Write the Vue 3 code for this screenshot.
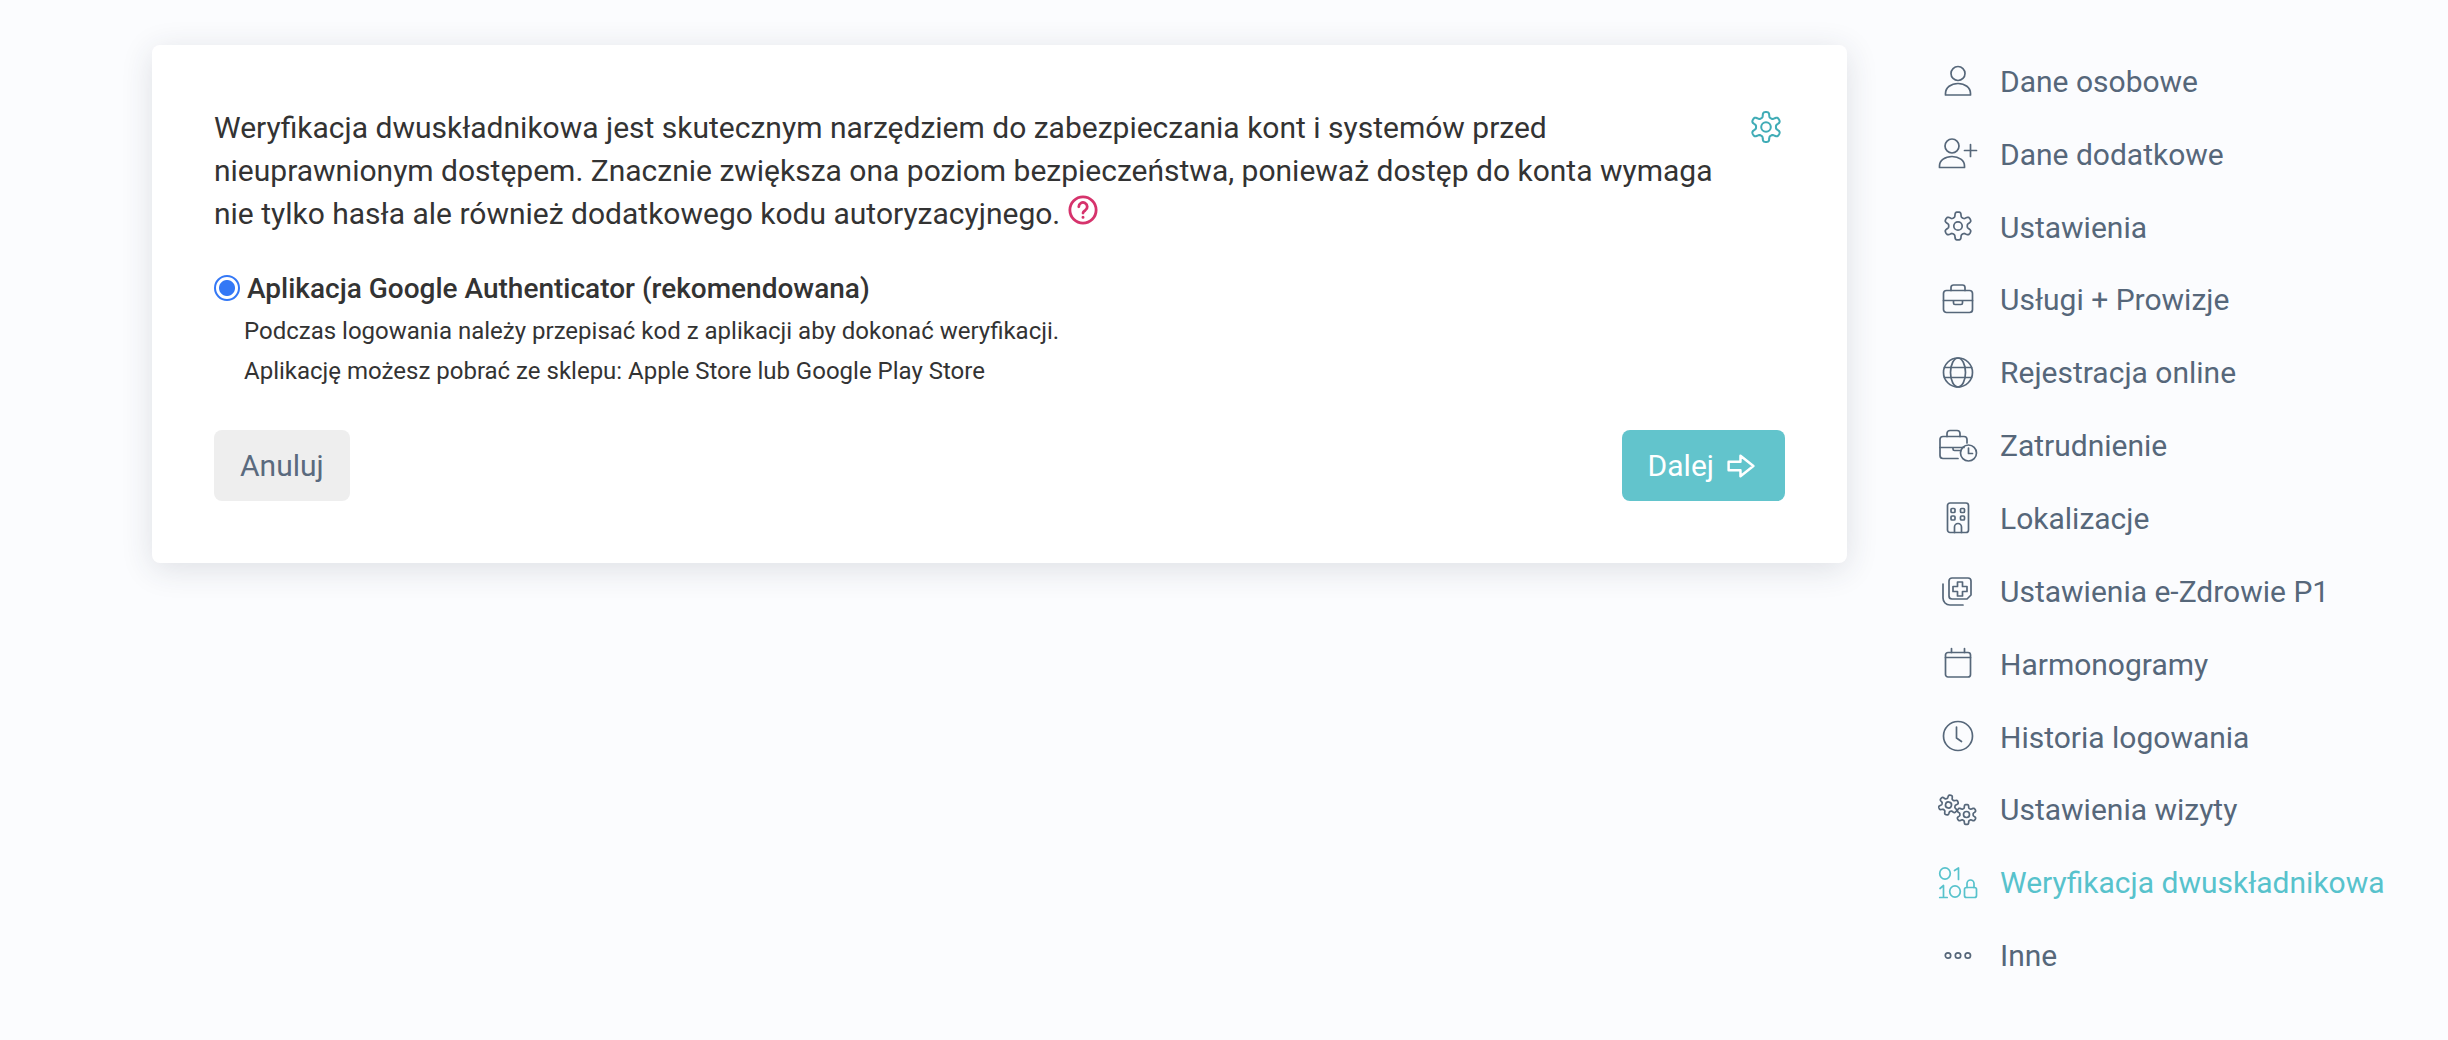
<template>
  <div class="page">
    <main class="card">
      <div class="intro">
        <p class="lead">
          Weryfikacja dwuskładnikowa jest skutecznym narzędziem do zabezpieczania kont i systemów przed
          nieuprawnionym dostępem. Znacznie zwiększa ona poziom bezpieczeństwa, ponieważ dostęp do konta wymaga
          nie tylko hasła ale również dodatkowego kodu autoryzacyjnego.
          <svg class="help" viewBox="0 0 32 32" fill="none" stroke="#d6336c" stroke-width="3" stroke-linecap="round">
            <circle cx="16" cy="16" r="14" />
            <path d="M11.500 12.500a4.500 4.500 0 1 1 7 3.700c-1.600 1-2.500 1.600-2.500 3" />
            <circle cx="16" cy="23.800" r=".8" fill="#d6336c" stroke-width="1.600" />
          </svg>
        </p>
        <svg class="gear" viewBox="0 0 24 24" fill="none" stroke="#40acb6" stroke-width="1.350" stroke-linejoin="round">
          <path :d="gearPath" />
          <circle cx="12" cy="12" r="3.200" />
        </svg>
      </div>

      <label class="option">
        <input type="radio" name="method" checked />
        <span>Aplikacja Google Authenticator (rekomendowana)</span>
      </label>
      <div class="option-desc">
        <p>Podczas logowania należy przepisać kod z aplikacji aby dokonać weryfikacji.</p>
        <p>Aplikację możesz pobrać ze sklepu: Apple Store lub Google Play Store</p>
      </div>

      <div class="actions">
        <button class="btn btn-cancel">Anuluj</button>
        <button class="btn btn-next">
          Dalej
          <svg viewBox="0 0 26 22" fill="none" stroke="#fff" stroke-width="2.300" stroke-linejoin="round">
            <path d="M1.500 7h11V1.500L24.500 11l-12 9.500V15h-11z" />
          </svg>
        </button>
      </div>
    </main>

    <nav class="menu">
      <a v-for="item in items" :key="item.label" class="menu-item" :class="{ active: item.active }">
        <span class="menu-icon">
          <svg
            viewBox="0 0 38 38"
            fill="none"
            stroke="currentColor"
            stroke-width="1.700"
            stroke-linecap="round"
            stroke-linejoin="round"
            v-html="item.icon"
          ></svg>
        </span>
        {{ item.label }}
      </a>
    </nav>
  </div>
</template>

<script setup>
// six lobed cog, radius 10 around (12, 12), a lobe pointing straight up
function buildGear() {
  const pts = []
  for (let i = 0; i < 144; i++) {
    const a = (i / 144) * Math.PI * 2
    const r = 8.3 + 1.7 * Math.tanh(2.2 * Math.cos(6 * a))
    pts.push(`${(12 + r * Math.sin(a)).toFixed(2)} ${(12 - r * Math.cos(a)).toFixed(2)}`)
  }
  return 'M' + pts.join('L') + 'z'
}

const gearPath = buildGear()

const cog = (cx, cy, s, rotate = 0) => {
  const x = cx - 12 * s
  const y = cy - 12 * s
  return `<g transform="translate(${x} ${y}) scale(${s}) rotate(${rotate} 12 12)" stroke-width="${1.7 / s}"><path d="${gearPath}"/><circle cx="12" cy="12" r="3"/></g>`
}

const items = [
  {
    label: 'Dane osobowe',
    icon: '<circle cx="19" cy="11.500" r="7"/><path d="M6.500 33v-1.500c0-6 5.500-10 12.500-10s12.500 4 12.500 10V33z"/>',
  },
  {
    label: 'Dane dodatkowe',
    icon: '<circle cx="13" cy="11" r="7"/><path d="M.5 32.500V31c0-5.500 5.500-9.500 12.500-9.500s12.500 4 12.500 9.500v1.500z"/><path d="M31.500 9.500v12M25.500 15.500h12"/>',
  },
  { label: 'Ustawienia', icon: cog(19, 18, 1.4) },
  {
    label: 'Usługi + Prowizje',
    icon: '<rect x="4.500" y="9.500" width="29" height="22" rx="3"/><path d="M12 9.500V6.500C12 5 13 4 14.500 4h9C25 4 26 5 26 6.500v3M4.500 19.500h29M14.500 19.500V22c0 .8.700 1.500 1.500 1.500h6c.8 0 1.500-.7 1.500-1.500v-2.500"/>',
  },
  {
    label: 'Rejestracja online',
    icon: '<circle cx="19" cy="18.500" r="14.500"/><ellipse cx="19" cy="18.500" rx="7.500" ry="14.500"/><path d="M5.500 13.500h27M5.500 23.500h27"/>',
  },
  {
    label: 'Zatrudnienie',
    icon: '<path d="M19 31.500H4c-1.700 0-3-1.300-3-3v-16c0-1.700 1.300-3 3-3h21c1.700 0 3 1.300 3 3V16"/><path d="M8 9.500v-3c0-1.700 1.300-3 3-3h7c1.700 0 3 1.300 3 3v3M1 20.500h24M14 20.500V22c0 .8.700 1.500 1.500 1.500h5"/><circle cx="29.500" cy="26" r="8"/><path d="M29.500 21v5.500h4"/>',
  },
  {
    label: 'Lokalizacje',
    icon: '<rect x="8.500" y="4" width="21" height="29.500" rx="2.500"/><rect x="12" y="9.500" width="4" height="4" rx="1"/><rect x="21.500" y="9.500" width="4" height="4" rx="1"/><rect x="12" y="17" width="4" height="4" rx="1"/><rect x="21.500" y="17" width="4" height="4" rx="1"/><path d="M15.500 33.500V28a3.500 3.500 0 0 1 7 0v5.500"/>',
  },
  {
    label: 'Ustawienia e-Zdrowie P1',
    icon: '<path d="M10 9c0-1.700 1.300-3 3-3h16c1.700 0 3 1.300 3 3v14l-4 4H13c-1.700 0-3-1.300-3-3z"/><path d="M18.500 10h5v4.500H28v5h-4.500V24h-5v-4.500H14v-5h4.500z"/><path d="M4 12v14c0 4 3 7 7 7h13"/>',
  },
  {
    label: 'Harmonogramy',
    icon: '<rect x="6.500" y="7.500" width="25" height="24.500" rx="2.500"/><path d="M6.500 12.500h25M12.500 3.500v4M25.500 3.500v4"/>',
  },
  {
    label: 'Historia logowania',
    icon: '<circle cx="19" cy="18" r="14.500"/><path d="M17.500 9v11l5 3.500"/>',
  },
  { label: 'Ustawienia wizyty', icon: cog(9.500, 14, 1, 12) + cog(27.500, 23.500, 1) },
  {
    label: 'Weryfikacja dwuskładnikowa',
    active: true,
    icon: '<ellipse cx="6" cy="9.500" rx="5.300" ry="5.700"/><path d="M15.500 6.500 19.500 4v11.500"/><path d="M1 24.500l3.500-3v12M.7 33.500h7.500"/><ellipse cx="16" cy="27.500" rx="5.300" ry="5.700"/><rect x="25.500" y="23.500" width="12" height="10" rx="2"/><path d="M28 23.500v-4a3.500 3.500 0 0 1 7 0v4"/>',
  },
  {
    label: 'Inne',
    icon: '<circle cx="9" cy="18.500" r="2.700"/><circle cx="19" cy="18.500" r="2.700"/><circle cx="28.800" cy="18.500" r="2.700"/>',
  },
]
</script>

<style>
html,
body {
  margin: 0;
  background: #fbfcfe;
}
</style>

<style scoped>
.page {
  display: flex;
  align-items: flex-start;
  height: 1040px;
  overflow: hidden;
  padding: 45px 0 0 152px;
  box-sizing: border-box;
  background: #fbfcfe;
  font-family: Roboto, sans-serif;
}

.card {
  width: 1695px;
  height: 518px;
  box-sizing: border-box;
  padding: 61px 62px 0;
  background: #fff;
  border-radius: 8px;
  box-shadow: 0 6px 32px rgba(40, 50, 70, 0.14);
  color: #333;
}

.intro {
  display: flex;
  justify-content: space-between;
}

.lead {
  margin: 0;
  width: 1510px;
  font-size: 30px;
  line-height: 43px;
}

.help {
  width: 30px;
  height: 30px;
  vertical-align: -1px;
}

.gear {
  width: 36px;
  height: 36px;
  margin: 3px 1px 0 0;
}

.option {
  display: flex;
  align-items: center;
  gap: 7px;
  margin-top: 34px;
  font-size: 28px;
  font-weight: 500;
  line-height: 40px;
}

.option input {
  appearance: none;
  box-sizing: border-box;
  width: 26px;
  height: 26px;
  margin: -2px 0 0;
  border: 2px solid #3478f6;
  border-radius: 50%;
  background: radial-gradient(circle, #3478f6 0 7.500px, #fff 8.500px);
}

.option-desc {
  margin: 2px 0 0 30px;
  font-size: 24px;
  line-height: 40px;
}

.option-desc p {
  margin: 0;
}

.actions {
  display: flex;
  justify-content: space-between;
  margin-top: 39px;
}

.btn {
  display: flex;
  align-items: center;
  height: 71px;
  padding: 0 26px;
  border: 0;
  border-radius: 8px;
  font-family: inherit;
  font-size: 30px;
}

.btn-cancel {
  background: #eeeeee;
  color: #5a6a7e;
}

.btn-next {
  gap: 13px;
  padding-right: 30px;
  background: #62c4cc;
  color: #fff;
}

.btn-next svg {
  width: 28px;
  height: 24px;
}

.menu {
  display: flex;
  flex-direction: column;
  margin: 0 0 0 92px;
}

.menu-item {
  display: flex;
  align-items: center;
  gap: 23px;
  height: 72.850px;
  white-space: nowrap;
  font-size: 30px;
  color: #56677a;
}

.menu-item.active {
  color: #57c2cc;
}

.menu-icon {
  display: flex;
  width: 38px;
  height: 38px;
}

.menu-icon svg {
  width: 38px;
  height: 38px;
  overflow: visible;
}
</style>
